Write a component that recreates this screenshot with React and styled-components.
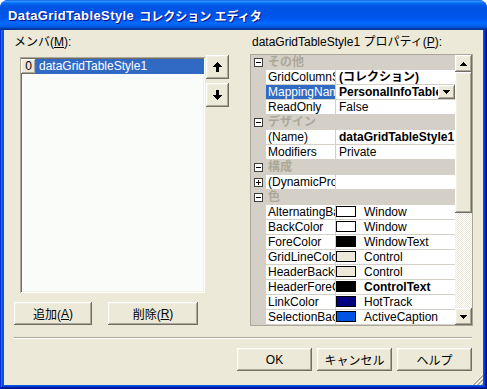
import React from 'react';
import styled, { createGlobalStyle, css } from 'styled-components';

const GlobalStyle = createGlobalStyle`
    html, body {
        margin: 0;
        padding: 0;
        background: #ffffff;
    }
    body {
        font-family: "Liberation Sans", "Noto Sans CJK JP", sans-serif;
        font-size: 12px;
        color: #000000;
    }
`;

const colors = {
    face: '#ECE9D8',
    light: '#F1EFE2',
    shadow: '#ACA899',
    dark: '#716F64',
    select: '#316AC5',
    line: '#D4D0C8',
    grayText: '#ACA899',
};

const raised = css`
    background: ${colors.face};
    box-shadow: inset -1px -1px ${colors.dark}, inset 1px 1px #ffffff,
        inset -2px -2px ${colors.shadow}, inset 2px 2px ${colors.light};
`;

const sunken = css`
    box-shadow: inset 1px 1px ${colors.shadow}, inset -1px -1px #ffffff,
        inset 2px 2px ${colors.dark}, inset -2px -2px ${colors.light};
`;

const Window = styled.div`
    width: 487px;
    height: 389px;
    display: flex;
    flex-direction: column;
    border-radius: 8px 8px 0 0;
    overflow: hidden;
    background: #0855dd;
`;

const TitleBar = styled.div`
    height: 30px;
    flex: 0 0 30px;
    display: flex;
    align-items: center;
    gap: 5px;
    padding: 0 0 0 8px;
    box-sizing: border-box;
    background: linear-gradient(
        180deg,
        #0058ee 0%,
        #3a93ff 4%,
        #288eff 6%,
        #127dff 8%,
        #036ffc 10%,
        #0262ee 14%,
        #0057e5 20%,
        #0054e3 24%,
        #0055eb 56%,
        #005bf5 66%,
        #026afe 76%,
        #0062ef 86%,
        #0052d6 92%,
        #0040ab 94%,
        #003092 100%
    );
    color: #ffffff;
    font-family: "Liberation Sans", "Noto Sans CJK JP", sans-serif;
    font-weight: bold;
    font-size: 13px;
    text-shadow: 1px 1px #0f1089;
`;

const TitlePart = styled.span`
    letter-spacing: ${(p) => (p.$cjk ? '0' : '0.4px')};
    font-size: ${(p) => (p.$cjk ? 12 : 13)}px;
`;

const Frame = styled.div`
    flex: 1;
    display: flex;
    padding: 0 4px 4px 4px;
    box-shadow: inset -1px -1px #00138c, inset 1px 0 #0831d9,
        inset -2px -2px #001ea0, inset 2px 0 #166aee,
        inset -3px -3px #003bda, inset 3px 0 #0855dd;
`;

const Client = styled.div`
    flex: 1;
    position: relative;
    display: flex;
    flex-direction: column;
    background: ${colors.face};
    padding-top: 5px;
`;

const MainRow = styled.div`
    display: flex;
    gap: 21px;
    padding: 0 10px;
`;

const LeftColumn = styled.div`
    width: 215px;
    display: flex;
    flex-direction: column;
`;

const RightColumn = styled.div`
    width: 223px;
    display: flex;
    flex-direction: column;
`;

const Label = styled.div`
    line-height: 14px;
    height: 14px;
    white-space: nowrap;
    padding-left: ${(p) => p.$indent || 0}px;
`;

const Key = styled.span`
    text-decoration: underline;
    text-underline-offset: 1px;
`;

const ListRow = styled.div`
    display: flex;
    align-items: flex-start;
    margin-top: 6px;
    padding-left: 6px;
`;

const ListBox = styled.div`
    width: 185px;
    height: 236px;
    margin-top: 2px;
    box-sizing: border-box;
    padding: 1px 1px 2px 1px;
    background: #f9fcf9;
    ${sunken};
`;

const ListItem = styled.div`
    display: flex;
    height: 15px;
    margin: 1px 0 0 0;
`;

const IndexCell = styled.div`
    width: 15px;
    height: 15px;
    line-height: 15px;
    text-align: center;
    ${raised};
`;

const ItemText = styled.div`
    flex: 1;
    height: 15px;
    line-height: 15px;
    padding-left: 3px;
    background: ${(p) => (p.$selected ? colors.select : 'transparent')};
    color: ${(p) => (p.$selected ? '#ffffff' : '#000000')};
`;

const MoveButtons = styled.div`
    display: flex;
    flex-direction: column;
    gap: 4px;
    margin-left: 1px;
`;

const Button = styled.button`
    width: ${(p) => p.$w || 75}px;
    height: ${(p) => p.$h || 23}px;
    padding: 0;
    margin: 0;
    border: none;
    display: flex;
    align-items: center;
    justify-content: center;
    font-family: "Liberation Sans", "Noto Sans CJK JP", sans-serif;
    font-size: 12px;
    color: #000000;
    ${raised};
`;

const ActionRow = styled.div`
    display: flex;
    gap: 16px;
    margin-top: 9px;
`;

const PropGrid = styled.div`
    margin-top: 5px;
    height: 272px;
    box-sizing: border-box;
    border: 1px solid ${colors.shadow};
    display: flex;
    background: #ffffff;
`;

const Rows = styled.div`
    flex: 1;
    display: flex;
    flex-direction: column;
    overflow: hidden;
`;

const GridRow = styled.div`
    display: grid;
    grid-template-columns: 15px 70px 1fr;
    height: 15px;
    box-sizing: border-box;
    border-bottom: 1px solid ${colors.line};
    background: ${(p) => (p.$cat ? colors.line : '#ffffff')};
`;

const Gutter = styled.div`
    background: ${colors.line};
    display: flex;
    align-items: center;
    justify-content: center;
`;

const CatName = styled.div`
    grid-column: 2 / 4;
    padding-left: 2px;
    line-height: 15px;
    font-weight: bold;
    color: ${colors.grayText};
`;

const NameCell = styled.div`
    overflow: hidden;
    white-space: nowrap;
    padding-left: 2px;
    line-height: 14px;
    border-right: 1px solid ${colors.line};
    background: ${(p) => (p.$selected ? colors.select : '#ffffff')};
    color: ${(p) => (p.$selected ? '#ffffff' : '#000000')};
`;

const ValueCell = styled.div`
    display: flex;
    align-items: stretch;
    overflow: hidden;
    white-space: nowrap;
    min-width: 0;
`;

const ValueText = styled.div`
    flex: 1;
    min-width: 0;
    overflow: hidden;
    line-height: 14px;
    padding-left: ${(p) => (p.$swatch ? 8 : 3)}px;
    font-weight: ${(p) => (p.$bold ? 'bold' : 'normal')};
`;

const Swatch = styled.div`
    flex: 0 0 20px;
    height: 11px;
    margin: 1px 0 0 0;
    box-sizing: border-box;
    border: 1px solid #000000;
    background: ${(p) => p.$color};
`;

const DropButton = styled.div`
    flex: 0 0 17px;
    height: 14px;
    display: flex;
    align-items: center;
    justify-content: center;
    ${raised};
`;

const ScrollBar = styled.div`
    width: 17px;
    display: flex;
    flex-direction: column;
`;

const ScrollButton = styled.div`
    height: 17px;
    flex: 0 0 17px;
    display: flex;
    align-items: center;
    justify-content: center;
    ${raised};
`;

const Thumb = styled.div`
    flex: 0 0 141px;
    ${raised};
`;

const Track = styled.div`
    flex: 1;
    background: repeating-conic-gradient(#ffffff 0 25%, ${colors.face} 0 50%) 0 0 / 2px 2px;
`;

const Separator = styled.div`
    margin: 11px 11px 0 10px;
    height: 1px;
    background: ${colors.shadow};
    border-bottom: 1px solid #ffffff;
`;

const Footer = styled.div`
    display: flex;
    justify-content: flex-end;
    gap: 5px;
    margin-top: 9px;
    padding-right: 11px;
`;

const Grip = styled.svg`
    position: absolute;
    right: 0;
    bottom: 0;
`;

const Triangle = ({ down }) => (
    <svg width="7" height="4" viewBox="0 0 7 4" shapeRendering="crispEdges">
        <polygon points={down ? '0,0 7,0 3.5,4' : '3.5,0 7,4 0,4'} fill="#000" />
    </svg>
);

const Arrow = ({ down }) => (
    <svg width="9" height="10" viewBox="0 0 9 10" shapeRendering="crispEdges">
        <polygon
            points={
                down
                    ? '4.5,10 9,5 6,5 6,0 3,0 3,5 0,5'
                    : '4.5,0 9,5 6,5 6,10 3,10 3,5 0,5'
            }
            fill="#000"
        />
    </svg>
);

const ExpandBox = ({ plus }) => (
    <svg width="9" height="9" viewBox="0 0 9 9" shapeRendering="crispEdges">
        <rect x="0.5" y="0.5" width="8" height="8" fill="#fff" stroke="#404040" />
        <line x1="2" y1="4.5" x2="7" y2="4.5" stroke="#000" />
        {plus && <line x1="4.5" y1="2" x2="4.5" y2="7" stroke="#000" />}
    </svg>
);

const rows = [
    { cat: 'その他' },
    { name: 'GridColumnStyles', value: '(コレクション)', bold: true },
    { name: 'MappingName', value: 'PersonalInfoTable', bold: true, selected: true, dropdown: true },
    { name: 'ReadOnly', value: 'False' },
    { cat: 'デザイン' },
    { name: '(Name)', value: 'dataGridTableStyle1', bold: true },
    { name: 'Modifiers', value: 'Private' },
    { cat: '構成' },
    { name: '(DynamicProperties)', value: '', expand: true },
    { cat: '色' },
    { name: 'AlternatingBackColor', swatch: '#ffffff', value: 'Window' },
    { name: 'BackColor', swatch: '#ffffff', value: 'Window' },
    { name: 'ForeColor', swatch: '#000000', value: 'WindowText' },
    { name: 'GridLineColor', swatch: '#ECE9D8', value: 'Control' },
    { name: 'HeaderBackColor', swatch: '#ECE9D8', value: 'Control' },
    { name: 'HeaderForeColor', swatch: '#000000', value: 'ControlText', bold: true },
    { name: 'LinkColor', swatch: '#000080', value: 'HotTrack' },
    { name: 'SelectionBackColor', swatch: '#0054E3', value: 'ActiveCaption' },
];

const PropertyRow = ({ row }) => {
    if (row.cat) {
        return (
            <GridRow $cat>
                <Gutter>
                    <ExpandBox />
                </Gutter>
                <CatName>{row.cat}</CatName>
            </GridRow>
        );
    }
    return (
        <GridRow>
            <Gutter>{row.expand && <ExpandBox plus />}</Gutter>
            <NameCell $selected={row.selected}>{row.name}</NameCell>
            <ValueCell>
                {row.swatch && <Swatch $color={row.swatch} />}
                <ValueText $bold={row.bold} $swatch={!!row.swatch}>
                    {row.value}
                </ValueText>
                {row.dropdown && (
                    <DropButton>
                        <Triangle down />
                    </DropButton>
                )}
            </ValueCell>
        </GridRow>
    );
};

const App = () => (
    <>
        <GlobalStyle />
        <Window>
            <TitleBar>
                <TitlePart>DataGridTableStyle</TitlePart>
                <TitlePart $cjk>コレクション エディタ</TitlePart>
            </TitleBar>
            <Frame>
                <Client>
                    <MainRow>
                        <LeftColumn>
                            <Label>
                                メンバ(<Key>M</Key>):
                            </Label>
                            <ListRow>
                                <ListBox>
                                    <ListItem>
                                        <IndexCell>0</IndexCell>
                                        <ItemText $selected>dataGridTableStyle1</ItemText>
                                    </ListItem>
                                </ListBox>
                                <MoveButtons>
                                    <Button $w={23} $h={24}>
                                        <Arrow />
                                    </Button>
                                    <Button $w={23} $h={24}>
                                        <Arrow down />
                                    </Button>
                                </MoveButtons>
                            </ListRow>
                            <ActionRow>
                                <Button $w={78}>
                                    追加(<Key>A</Key>)
                                </Button>
                                <Button $w={90}>
                                    削除(<Key>R</Key>)
                                </Button>
                            </ActionRow>
                        </LeftColumn>
                        <RightColumn>
                            <Label $indent={2}>
                                dataGridTableStyle1 プロパティ(<Key>P</Key>):
                            </Label>
                            <PropGrid>
                                <Rows>
                                    {rows.map((row, i) => (
                                        <PropertyRow key={i} row={row} />
                                    ))}
                                </Rows>
                                <ScrollBar>
                                    <ScrollButton>
                                        <Triangle />
                                    </ScrollButton>
                                    <Thumb />
                                    <Track />
                                    <ScrollButton>
                                        <Triangle down />
                                    </ScrollButton>
                                </ScrollBar>
                            </PropGrid>
                        </RightColumn>
                    </MainRow>
                    <Separator />
                    <Footer>
                        <Button>OK</Button>
                        <Button>キャンセル</Button>
                        <Button>ヘルプ</Button>
                    </Footer>
                    <Grip width="12" height="12" viewBox="0 0 12 12" shapeRendering="crispEdges">
                        {[0, 4, 8].map((o) => (
                            <g key={o}>
                                <line x1={12} y1={1 + o} x2={1 + o} y2={12} stroke="#ffffff" />
                                <line x1={12} y1={2 + o} x2={2 + o} y2={12} stroke={colors.shadow} />
                                <line x1={12} y1={3 + o} x2={3 + o} y2={12} stroke={colors.shadow} />
                            </g>
                        ))}
                    </Grip>
                </Client>
            </Frame>
        </Window>
    </>
);

export default App;
